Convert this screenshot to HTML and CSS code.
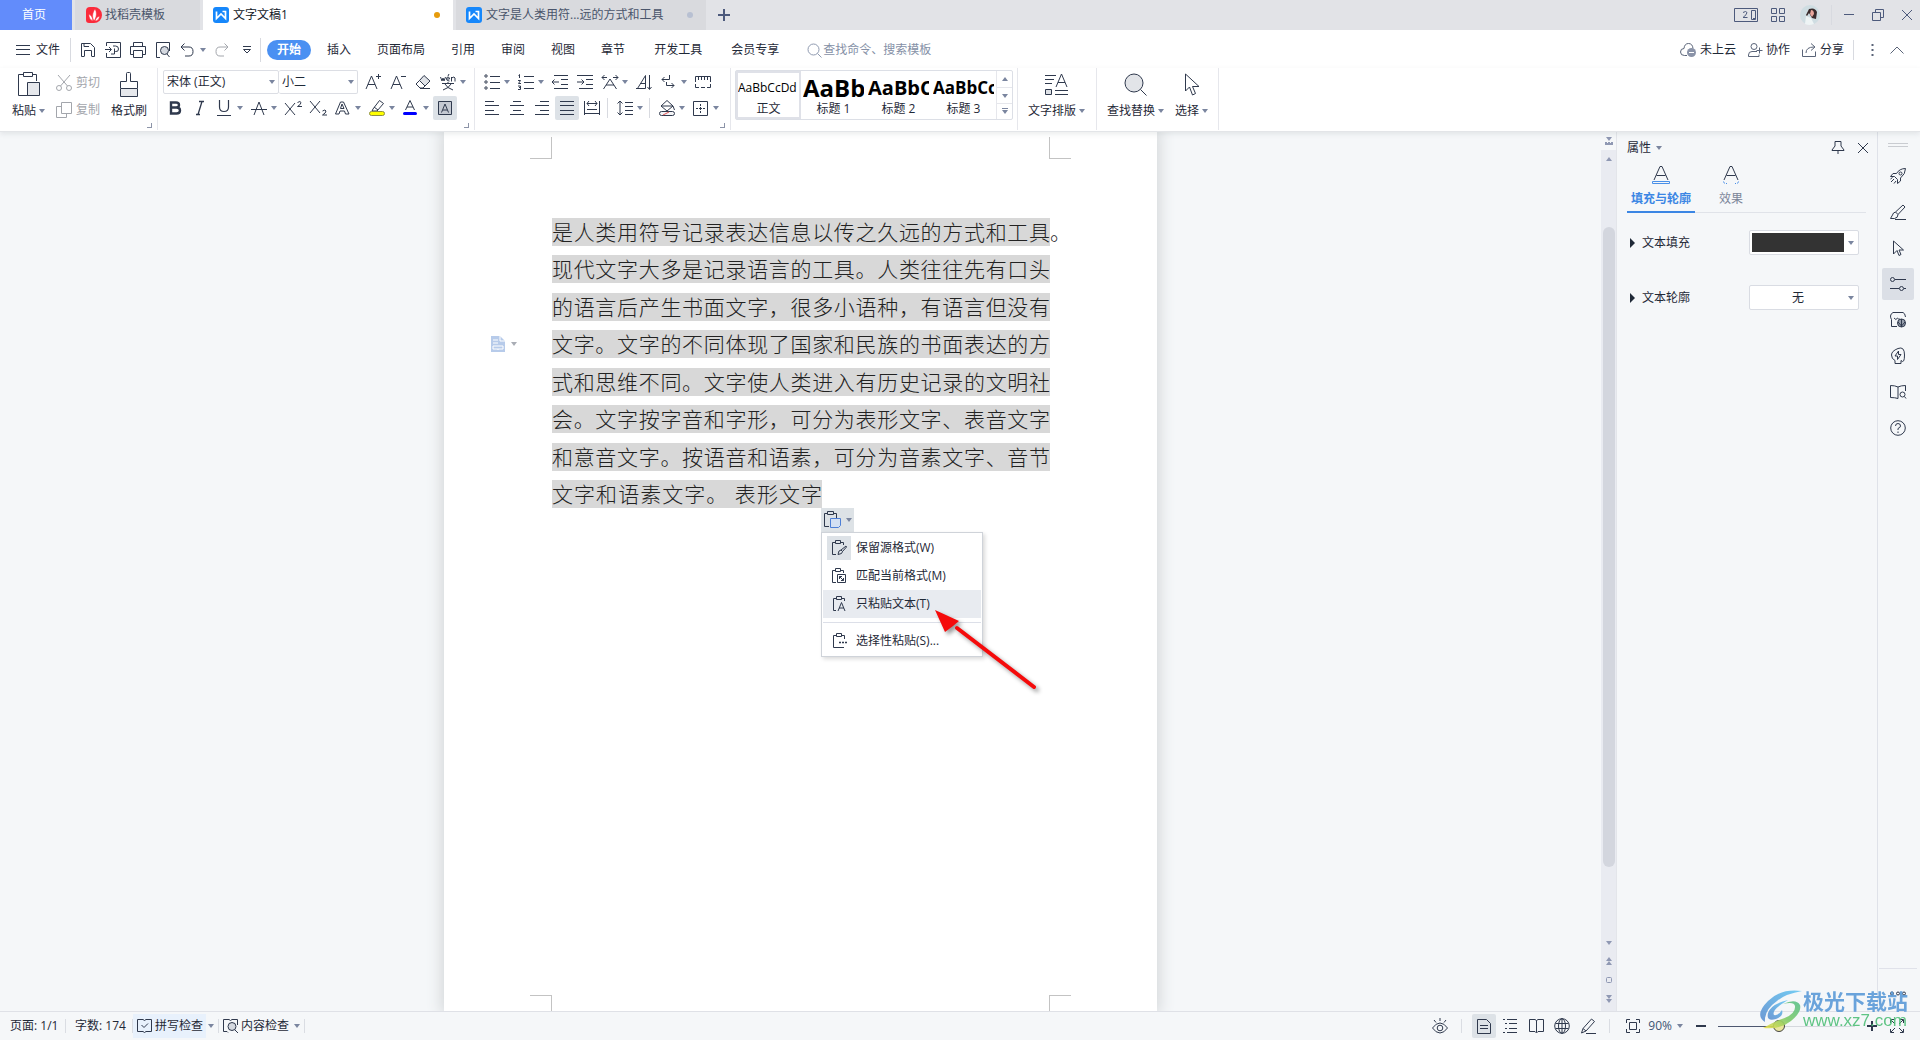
FILE: index.html
```html
<!DOCTYPE html>
<html lang="zh-CN">
<head>
<meta charset="utf-8">
<title>文字文稿1</title>
<link rel="stylesheet" href="styles.css">
</head>
<body>
<header class="titlebar">
  <nav class="tabs">
    <button class="tab home">首页</button>
    <button class="tab docer"><svg class="i" width="16" height="16" viewBox="0 0 16 16"><path d="M4 0h4a8 8 0 0 1 0 16H3q-3 0-3-3V4q0-4 4-4z" fill="#fb2b3b" stroke="none"/><path d="M8 14C6 11 6 6 9 2c2 3 2 8-1 12zM7 14C4 13 2.500 10 3 7c2 1 4 4 4 7zM9 14c1-3 2-4 4.500-5 0 3-2 5-4.500 5z" fill="#fff" stroke="#fb2b3b" stroke-width=".6"/></svg>找稻壳模板</button>
    <button class="tab doc active"><svg class="i" width="16" height="16" viewBox="0 0 16 16"><rect width="16" height="16" rx="3" fill="#1687fb" stroke="none"/><path d="M3.500 4.500v7L8 7l4.500 4.500v-7H9.500" stroke="#fff" stroke-width="1.700"/></svg><span>文字文稿1</span><i class="dot"></i></button>
    <button class="tab doc"><svg class="i" width="16" height="16" viewBox="0 0 16 16"><rect width="16" height="16" rx="3" fill="#1687fb" stroke="none"/><path d="M3.500 4.500v7L8 7l4.500 4.500v-7H9.500" stroke="#fff" stroke-width="1.700"/></svg><span>文字是人类用符...远的方式和工具</span><i class="dot"></i></button>
    <button class="newtab" aria-label="新建"><svg class="i" width="12" height="12" viewBox="0 0 12 12"><path d="M6 0v12M0 6h12" stroke-width="2"/></svg></button>
  </nav>
  <div class="window-tools">
    <button aria-label="窗口"><svg class="i" width="24" height="14" viewBox="0 0 24 14"><path d="M.5.5h23v13H.5zM17.500 2.500h4v9h-4zM9 4.500q3-2 4 0 0 2-4 5h4.500M19 10.500h2"/></svg></button>
    <button class="apps" aria-label="应用"><svg class="i" width="14" height="14" viewBox="0 0 14 14"><path d="M.5.5h5v5h-5zM8.500.5h5v5h-5zM.5 8.500h5v5h-5zM8.500 8.500h5v5h-5z"/></svg></button>
    <button class="user" aria-label="账号"><svg class="i" width="20" height="20" viewBox="0 0 20 20"><circle cx="10" cy="10" r="10" fill="#cfdde2" stroke="none"/><path d="M9 4q6-2 8 3l-1 7-4-1-3-5-2 3-1-1z" fill="#3a2b2c" stroke="none"/><path d="M11 5q3 0 3 4l-2 3-2-3z" fill="#e8a69c" stroke="none"/><path d="M6 11l5 2 3 6q-5 2-9 0z" fill="#eef4f5" stroke="none"/></svg></button>
    <span class="vline"></span>
    <button aria-label="最小化"><svg class="i" width="12" height="12" viewBox="0 0 12 12"><path d="M1 5.500h10"/></svg></button>
    <button aria-label="还原"><svg class="i" width="12" height="12" viewBox="0 0 12 12"><path d="M.5 3.500h8v8h-8zM3.500 3V.5h8v8H9"/></svg></button>
    <button aria-label="关闭"><svg class="i" width="12" height="12" viewBox="0 0 12 12"><path d="M1 1l10 10M11 1L1 11"/></svg></button>
  </div>
</header>

<div class="menubar">
  <button class="file"><svg class="i" width="14" height="12" viewBox="0 0 14 12"><path d="M0 1.500h14M0 5.500h14M0 10.500h14"/></svg>文件</button>
  <span class="vline tall"></span>
  <div class="quick">
    <button class="ib" aria-label="保存"><svg class="i" width="16" height="16" viewBox="0 0 16 16"><path d="M4 14.500H1.500v-13h9l4 4v9H12M4.500 14.500v-6h7v6M4 1.500v3h5"/></svg></button>
    <button class="ib" aria-label="输出PDF"><svg class="i" width="16" height="16" viewBox="0 0 16 16"><path d="M1.500 4V.5h14v15h-14V11M0 7.500h6M4 5l2.500 2.500L4 10M8 4h2.500q3 0 3 3t-3 2.500H9.500V6.500M6 12h3.500V9"/></svg></button>
    <button class="ib" aria-label="打印"><svg class="i" width="16" height="16" viewBox="0 0 16 16"><path d="M3.500 4V.5h9V4M3.500 12.500h-3v-8h15v8h-3M3.500 8.500h9v7h-9z"/></svg></button>
    <button class="ib" aria-label="打印预览"><svg class="i" width="16" height="16" viewBox="0 0 16 16"><path d="M5 15.500H1.500V.5h13V9M14.500 15l-2.500-3"/><circle cx="9.500" cy="8.500" r="4" fill="#d5d9e0"/></svg></button>
    <button class="ib dd" aria-label="撤销"><svg class="i" width="14" height="14" viewBox="0 0 14 14"><path d="M4.500.5L1 4l3.500 3.500M1 4h8q4 0 4 4.500T9 13H5"/></svg><i class="caret"></i></button>
    <button class="ib off" aria-label="恢复"><svg class="i" width="14" height="14" viewBox="0 0 14 14"><path d="M9.500.5L13 4 9.500 7.500M13 4H5Q1 4 1 8.500T5 13h4"/></svg></button>
    <button class="ib" aria-label="更多"><svg class="i" width="8" height="8" viewBox="0 0 8 8"><path d="M0 .5h8M.5 3.500L4 7l3.500-3.500z"/></svg></button>
  </div>
  <span class="vline tall"></span>
  <nav class="ribbon-tabs">
    <button class="on">开始</button><button>插入</button><button>页面布局</button><button>引用</button><button>审阅</button><button>视图</button><button>章节</button><button class="wide">开发工具</button><button class="wide">会员专享</button>
  </nav>
  <label class="search"><svg class="i" width="15" height="15" viewBox="0 0 15 15"><circle cx="6.500" cy="6.500" r="5.500"/><path d="M10.500 10.500l4 4"/></svg><input type="text" aria-label="查找命令" placeholder="查找命令、搜索模板"></label>
  <div class="account">
    <button class="share"><svg class="i" width="16" height="14" viewBox="0 0 16 14"><path d="M7 12.500H4.500Q.5 12.500.5 9T4 5.500Q4.500.5 8.500.5t4.500 5"/><circle cx="11.500" cy="9.500" r="4.500" fill="#8a93a8" stroke="none"/><path d="M9 9.500h5" stroke="#fff"/></svg>未上云</button>
    <button class="share"><svg class="i" width="14" height="14" viewBox="0 0 14 14"><circle cx="6" cy="3.500" r="3"/><path d="M9 8.500H4q-3.500 0-3.500 3.500v1.500h10.500v-2M11.500 4.500v6M8.500 7.500h6"/></svg>协作</button>
    <button class="share"><svg class="i" width="14" height="14" viewBox="0 0 14 14"><path d="M.5 6.500v7h13v-5M4 10q0-6 8-6M9 .5l4 3.500L9 7.500"/></svg>分享</button>
    <span class="vline"></span>
    <button class="ib" aria-label="更多选项"><svg class="i" width="3" height="12" viewBox="0 0 3 12"><path d="M1.500 0v2M1.500 5v2M1.500 10v2" stroke-width="2"/></svg></button>
    <button class="ib" aria-label="收起"><svg class="i" width="14" height="8" viewBox="0 0 14 8"><path d="M.5 7.500L7 1l6.500 6.500"/></svg></button>
  </div>
</div>

<div class="ribbon">
  <section class="group clip">
    <button class="big"><svg class="i" width="24" height="26" viewBox="0 0 24 26"><path d="M11 23.500H1.500v-21H6M15 2.500h4.500V9M6.500.5h9v4h-9z"/><path d="M10.500 10.500h12v13h-12z" fill="#e6e8ec"/></svg><span>粘贴<i class="caret"></i></span></button>
    <div class="stack">
      <button class="off"><svg class="i" width="16" height="16" viewBox="0 0 16 16"><path d="M2 0l9.500 11M14 0L4.500 11"/><circle cx="3" cy="13" r="2.500"/><circle cx="13" cy="13" r="2.500"/></svg>剪切</button>
      <button class="off"><svg class="i" width="16" height="16" viewBox="0 0 16 16"><path d="M5.500.5h10v11h-10zM5 4.500H.5v11h10V12"/></svg>复制</button>
    </div>
    <button class="big brush"><svg class="i" width="20" height="26" viewBox="0 0 20 26"><path d="M1.500 16.500h17v8h-17z" fill="#e6e8ec"/><path d="M1.500 16v-6.500h6v-8q0-1 1-1h2q1 0 1 1v8h7V16"/></svg><span>格式刷</span></button>
    <i class="corner"></i>
  </section>

  <section class="group font">
    <div class="row">
      <label class="combo family"><select aria-label="字体"><option>宋体 (正文)</option></select><i class="caret"></i></label>
      <label class="combo size"><select aria-label="字号"><option>小二</option></select><i class="caret"></i></label>
      <button class="ib" aria-label="增大字号"><svg class="i" width="16" height="16" viewBox="0 0 16 16"><path d="M1 15L6.500 2 12 15M3 10.500h7M13.500 0v5M11 2.500h5"/></svg></button>
      <button class="ib" aria-label="减小字号"><svg class="i" width="16" height="16" viewBox="0 0 16 16"><path d="M1 15L6.500 2 12 15M3 10.500h7M11 2.500h5"/></svg></button>
      <button class="ib" aria-label="清除格式"><svg class="i" width="16" height="16" viewBox="0 0 16 16"><path d="M9 1.500L15 7l-5 5-5.500-5.500z" fill="#dfe2e7"/><path d="M4.500 6.500L1 10l4 4h3l2-2M5 14.500h10"/></svg></button>
      <button class="ib dd" aria-label="拼音指南"><svg class="i" width="16" height="17" viewBox="0 0 16 17"><path d="M.5 3l1.500 4 1-3 1 3 1.500-4M6.500 5h3q0-2-1.500-2t-1.500 2 3 2M8 2l1-2M11.500 7.500V3M11.500 4q3-2 3.500 0v3.500M2 9.500h12M8 8v1M5 10q2 4 8 6M11 10q-2 4-8 6"/></svg><i class="caret"></i></button>
    </div>
    <div class="row">
      <button class="ib" aria-label="加粗"><svg class="i" width="12" height="14" viewBox="0 0 12 14"><path d="M2 1.500h5q3 0 3 2.500T7 6.500H2zM2 6.500h5.500q3.500 0 3.500 3t-3.500 3H2z" stroke-width="2.400"/></svg></button>
      <button class="ib" aria-label="倾斜"><svg class="i" width="10" height="14" viewBox="0 0 10 14"><path d="M4 .5h5M1 13.500h4M7 .5L3 13.500" stroke-width="1.300"/></svg></button>
      <button class="ib dd" aria-label="下划线"><svg class="i" width="14" height="16" viewBox="0 0 14 16"><path d="M2.500 0v7q0 4.500 4.500 4.500T11.500 7V0M0 15.500h14" stroke-width="1.200"/></svg><i class="caret"></i></button>
      <button class="ib dd" aria-label="删除线"><svg class="i" width="16" height="15" viewBox="0 0 16 15"><path d="M3 14L8 1l5 13M0 8.500h16"/></svg><i class="caret"></i></button>
      <button class="ib" aria-label="上标"><svg class="i" width="17" height="15" viewBox="0 0 17 15"><path d="M0 2l10 12M10 2L0 14M12.500 1.500q3-2 3.500 0 0 2-3.500 4H17"/></svg></button>
      <button class="ib" aria-label="下标"><svg class="i" width="17" height="16" viewBox="0 0 17 16"><path d="M0 1l10 12M10 1L0 13M12.500 11q3-2 3.500 0 0 2-3.500 4H17"/></svg></button>
      <button class="ib dd" aria-label="文字效果"><svg class="i" width="15" height="14" viewBox="0 0 15 14"><path d="M.5 13L5.500 1h3l5.500 12h-3.500l-1-3H5l-1 3zM5.500 7.500h3.500L7 3z"/></svg><i class="caret"></i></button>
      <button class="ib dd" aria-label="突出显示"><svg class="i" width="16" height="16" viewBox="0 0 16 16"><path d="M4 9l6.500-8.500 4 3L8 11H3z"/><path d="M5 7l4 3" /><rect x=".5" y="11.500" width="15" height="4" rx="2" fill="#ff0" stroke="#8d8f42"/></svg><i class="caret"></i></button>
      <button class="ib dd" aria-label="字体颜色"><svg class="i" width="14" height="16" viewBox="0 0 14 16"><path d="M2.500 10L7 .5 11.500 10M4 7h6"/><path d="M1.500 13.500h11" stroke="#0000fe" stroke-width="3" stroke-linecap="round"/></svg><i class="caret"></i></button>
      <button class="ib on" aria-label="字符底纹"><svg class="i" width="14" height="14" viewBox="0 0 14 14"><path d="M.5.5h13v13H.5z" fill="#c4c9d2"/><path d="M3.500 11.500L7 3l3.500 8.500M5 9h4"/></svg></button>
    </div>
    <i class="corner"></i>
  </section>

  <section class="group para">
    <div class="row">
      <button class="ib dd" aria-label="项目符号"><svg class="i" width="16" height="16" viewBox="0 0 16 16"><path d="M6 2.500h10M6 8.500h10M6 14.500h10"/><circle cx="2" cy="2" r="1.200"/><circle cx="2" cy="8" r="1.200"/><circle cx="2" cy="14" r="1.200"/></svg><i class="caret"></i></button>
      <button class="ib dd" aria-label="编号"><svg class="i" width="16" height="16" viewBox="0 0 16 16"><path d="M6 2.500h10M6 8.500h10M6 14.500h10M.5 1.500l1-1V4M0 6.500h2.500L.5 9.500H3M0 12h2.500v3.500H0M1 13.500h1.500"/></svg><i class="caret"></i></button>
      <button class="ib" aria-label="减少缩进"><svg class="i" width="16" height="14" viewBox="0 0 16 14"><path d="M2 .5h14M9 4.500h7M9 9.500h7M2 13.500h14M0 7h7M2.500 4.500L0 7l2.500 2.500"/></svg></button>
      <button class="ib" aria-label="增加缩进"><svg class="i" width="16" height="14" viewBox="0 0 16 14"><path d="M0 .5h16M9 4.500h7M9 9.500h7M2 13.500h14M0 7h7M4.500 4.500L7 7 4.500 9.500"/></svg></button>
      <button class="ib dd" aria-label="中文版式"><svg class="i" width="16" height="14" viewBox="0 0 16 14"><path d="M1.500 14L8 4l6.500 10M4 10h8M0 2.500h5M2.500 0L0 2.500 2.500 5M16 2.500h-5M13.500 0L16 2.500 13.500 5"/></svg><i class="caret"></i></button>
      <button class="ib" aria-label="排序"><svg class="i" width="16" height="15" viewBox="0 0 16 15"><path d="M0 13.500h9.500V.5L1.500 13.500M4 8.500h5M13.500 0v14M11.500 12l2 2.500 2-2.500"/></svg></button>
      <button class="ib dd" aria-label="换行"><svg class="i" width="14" height="14" viewBox="0 0 14 14"><path d="M8.500 0v4.500H1M3.500 2L1 4.500 3.500 7M5.500 7v3.500H13M10.500 8l2.500 2.500L10.500 13"/></svg><i class="caret"></i></button>
      <button class="ib" aria-label="制表位"><svg class="i" width="16" height="12" viewBox="0 0 16 12"><path d="M.5 6V.5h15V6M3.500 1v3M6.500 1v3M9.500 1v3M12.500 1v3M.5 8v3.500H4M15.500 8v3.500H12M6 11.500h4"/></svg></button>
    </div>
    <div class="row">
      <button class="ib" aria-label="左对齐"><svg class="i" width="14" height="14" viewBox="0 0 14 14"><path d="M0 .5h9M0 4.500h14M0 9.500h9M0 13.500h14"/></svg></button>
      <button class="ib" aria-label="居中"><svg class="i" width="14" height="14" viewBox="0 0 14 14"><path d="M3 .5h8M0 4.500h14M3 9.500h8M0 13.500h14"/></svg></button>
      <button class="ib" aria-label="右对齐"><svg class="i" width="14" height="14" viewBox="0 0 14 14"><path d="M5 .5h9M0 4.500h14M5 9.500h9M0 13.500h14"/></svg></button>
      <button class="ib on" aria-label="两端对齐"><svg class="i" width="14" height="14" viewBox="0 0 14 14"><path d="M0 .5h14M0 4.500h14M0 9.500h14M0 13.500h14"/></svg></button>
      <button class="ib" aria-label="分散对齐"><svg class="i" width="16" height="14" viewBox="0 0 16 14"><path d="M.5 0v14M15.500 0v14M3 2.500h10M5 0L3 2.500 5 5M11 0l2 2.500L11 5M3 8.500h10M1 12.500h14"/></svg></button>
      <span class="vline sep"></span>
      <button class="ib dd" aria-label="行距"><svg class="i" width="16" height="16" viewBox="0 0 16 16"><path d="M3 1v14M.5 3.500L3 1l2.500 2.500M.5 12.500L3 15l2.500-2.500M8 2.500h8M8 6.500h8M8 10.500h8M8 14.500h8"/></svg><i class="caret"></i></button>
      <span class="vline sep"></span>
      <button class="ib dd" aria-label="底纹颜色"><svg class="i" width="16" height="16" viewBox="0 0 16 16"><path d="M8 .5l6 5.500-6 5L2 6zM2 6h12l1.500 4"/><rect x=".5" y="11.500" width="15" height="4" rx="2" fill="#f4f4f6"/><path d="M4 15l6-3" stroke="#e05252"/></svg><i class="caret"></i></button>
      <button class="ib dd" aria-label="边框"><svg class="i" width="15" height="15" viewBox="0 0 15 15"><path d="M.5.5h14v14H.5zM7.500 3v2M7.500 6v3M7.500 10v2M3 7.500h2M6 7.500h3M10 7.500h2"/></svg><i class="caret"></i></button>
    </div>
    <i class="corner"></i>
  </section>

  <section class="group styles">
    <div class="gallery">
      <button class="on"><span class="s0">AaBbCcDd</span>正文</button>
      <button><span class="s1">AaBb</span>标题 1</button>
      <button><span class="s2">AaBbC</span>标题 2</button>
      <button><span class="s3">AaBbCc</span>标题 3</button>
      <div class="spin"><button aria-label="上一行"><i class="caret up"></i></button><button aria-label="下一行"><i class="caret"></i></button><button aria-label="全部样式"><i class="caret bar"></i></button></div>
    </div>
  </section>

  <section class="group layout">
    <button class="big"><svg class="i" width="24" height="24" viewBox="0 0 24 24"><path d="M0 2.500h11M0 6.500h9M0 10.500h7M11 14l5.500-13L22 14M13 9.500h7M10 17.500h13M10 21.500h13"/><path d="M.5 16.500h6v5h-6z" fill="#dfe2e7"/></svg><span>文字排版<i class="caret"></i></span></button>
  </section>
  <section class="group find">
    <button class="big"><svg class="i" width="24" height="24" viewBox="0 0 24 24"><circle cx="10" cy="10" r="9" fill="#e2e4e8"/><path d="M16.500 16.500l6 6"/></svg><span>查找替换<i class="caret"></i></span></button>
    <button class="big"><svg class="i" width="16" height="24" viewBox="0 0 16 24"><path d="M1.500 1v17l4-4 3 8 3-1.500-3-7H15z"/></svg><span>选择<i class="caret"></i></span></button>
  </section>
</div>

<main class="body">
  <div class="canvas">
    <article class="page">
      <i class="crop tl"></i><i class="crop tr"></i><i class="crop bl"></i><i class="crop br"></i>
      <button class="para-mark" aria-label="段落布局"><svg width="14" height="16" viewBox="0 0 14 16"><path d="M0 0h9l5 5v11H0z" fill="#b7cbea"/><path d="M9 0v5h5M2 4h5M2 7h5M2 10h10v3H2zM7 13v1" fill="none" stroke="#fff"/></svg><i class="caret"></i></button>
      <div class="text">
        <p><mark>是人类用符号记录表达信息以传之久远的方式和工具</mark>。</p>
        <p><mark>现代文字大多是记录语言的工具。人类往往先有口头</mark></p>
        <p><mark>的语言后产生书面文字，很多小语种，有语言但没有</mark></p>
        <p><mark>文字。文字的不同体现了国家和民族的书面表达的方</mark></p>
        <p><mark>式和思维不同。文字使人类进入有历史记录的文明社</mark></p>
        <p><mark>会。文字按字音和字形，可分为表形文字、表音文字</mark></p>
        <p><mark>和意音文字。按语音和语素，可分为音素文字、音节</mark></p>
        <p><mark class="last">文字和语素文字。 表形文字</mark></p>
      </div>
      <div class="paste">
        <button class="paste-btn" aria-label="粘贴选项"><svg class="i" width="18" height="18" viewBox="0 0 18 18"><path d="M5 15.500H.5v-13H4M9 2.500h3.500V7M3.500.5h6v3h-6z"/><path d="M6.500 7.500h10v7l-2 2h-8z" stroke="#4d7fd6" fill="#d3e0f3"/></svg><i class="caret"></i></button>
        <div class="menu">
          <button><span class="mi on"><svg class="i" width="16" height="16" viewBox="0 0 16 16"><path d="M5 14.500H1.500v-12H4M10 2.500h2.500V5M4.500.5h5v3h-5zM15 6l-5 4 1.500 1.500L15.500 7zM10 10l-2 1-1 3.500 3.500-1 1-2"/></svg></span>保留源格式(W)</button>
          <button><span class="mi"><svg class="i" width="16" height="16" viewBox="0 0 16 16"><path d="M5 14.500H1.500v-12H4M10 2.500h2.500V5M4.500.5h5v3h-5zM6.500 6.500h8v8h-8zM8.500 8.500l4 4M8.500 11V8.500H11M12.500 10v2.500H10"/></svg></span>匹配当前格式(M)</button>
          <button class="hover"><span class="mi"><svg class="i" width="16" height="16" viewBox="0 0 16 16"><path d="M5 14.500H2.500v-12H5M11 2.500h2.500V5M5.500.5h5v3h-5zM7 15l3.500-8.500L14 15M8 12h5"/></svg></span>只粘贴文本(T)</button>
          <hr>
          <button><span class="mi"><svg class="i" width="16" height="16" viewBox="0 0 16 16"><path d="M13 14.500H2.500v-12H5M11 2.500h2.500V6M5.500.5h5v3h-5z"/><path d="M8 9.500h2M11 9.500h2M14 9.500h2" stroke-width="1.500"/></svg></span>选择性粘贴(S)...</button>
        </div>
      </div>
      <svg class="pointer" width="120" height="100" viewBox="0 0 120 100"><path d="M22 18L99 77" stroke="#f50b0b" stroke-width="4" stroke-linecap="round"/><path d="M0 0l24 11-6 5-8 6z" fill="#f50b0b"/></svg>
    </article>
  </div>
  <div class="scroll">
    <div class="ruler-btn"><svg width="8" height="8" viewBox="0 0 8 8"><path d="M1 0h6L4 4zM0 5h2v1h1V5h2v1h1V5h2v3H0z"/></svg></div>
    <svg width="6" height="4" viewBox="0 0 6 4"><path d="M0 4h6L3 0z"/></svg>
    <div class="track"><div class="thumb"></div></div>
    <svg width="6" height="4" viewBox="0 0 6 4"><path d="M0 0h6L3 4z"/></svg>
    <svg width="6" height="8" viewBox="0 0 6 8"><path d="M0 4h6L3 0zM0 8h6L3 4z"/></svg>
    <svg width="6" height="6" viewBox="0 0 6 6"><rect x=".5" y=".5" width="5" height="5" rx="1" fill="none" stroke="#8f98b3"/></svg>
    <svg width="6" height="8" viewBox="0 0 6 8"><path d="M0 0h6L3 4zM0 4h6L3 8z"/></svg>
  </div>
  <aside class="panel">
    <header><button class="ptitle">属性<i class="caret"></i></button><button class="ib" aria-label="固定"><svg class="i" width="14" height="13" viewBox="0 0 14 13"><path d="M4 .5h6V5l3 4v.5H1V9l3-4zM7 9.500V13"/></svg></button><button class="ib" aria-label="关闭面板"><svg class="i" width="10" height="10" viewBox="0 0 10 10"><path d="M0 0l10 10M10 0L0 10"/></svg></button></header>
    <nav>
      <button class="on"><svg class="i" width="18" height="18" viewBox="0 0 18 18"><path d="M2 14L8 .5h2L16 14M4.500 9.500h9"/><path d="M.5 15.500h17v2H.5z" stroke="#4a90e8"/></svg>填充与轮廓</button>
      <button><svg class="i" width="18" height="18" viewBox="0 0 18 18"><path d="M2 14L8 .5h2L16 14M4.500 9.500h9"/><path d="M1.500 15.500l1 2M16.500 15.500l-1 2M4 17.500h1M13 17.500h1" stroke="#4a90e8"/></svg>效果</button>
    </nav>
    <div class="prop"><i class="tri"></i><span>文本填充</span><button class="field" aria-label="填充颜色"><span class="swatch"></span><i class="caret"></i></button></div>
    <div class="prop"><i class="tri"></i><label for="outline">文本轮廓</label><div class="field"><select id="outline"><option>无</option></select><i class="caret"></i></div></div>
  </aside>
  <aside class="rail">
    <i class="grip"></i>
    <button aria-label="快捷"><svg class="i" width="16" height="16" viewBox="0 0 16 16"><path d="M15.500.5q-6 0-9 5H3L.5 8.500h4l3 3v4l3-2.500V10q5-4 5-9.500zM4 11l-3 3M6 13l-2 2.500M2.500 9.500L.5 11"/><circle cx="10.500" cy="5.500" r="1.500"/></svg></button>
    <button aria-label="样式"><svg class="i" width="16" height="16" viewBox="0 0 16 16"><path d="M13 1l2 2-7 7.500L5.500 8zM5.500 8Q3 8.500 2.500 11L.5 14.500h4Q8 14 8 10.500M5 15.500h11"/></svg></button>
    <button aria-label="选择"><svg class="i" width="14" height="16" viewBox="0 0 14 16"><path d="M2.500 1v13l3.500-3.500 2 5 2-1-2-4.500h4.500z"/></svg></button>
    <button class="on" aria-label="属性"><svg class="i" width="16" height="16" viewBox="0 0 16 16"><circle cx="2.500" cy="3.500" r="2"/><path d="M5 3.500h11M0 12.500h9M14 12.500h2"/><circle cx="11.500" cy="12.500" r="2"/></svg></button>
    <button aria-label="素材"><svg class="i" width="16" height="16" viewBox="0 0 16 16"><path d="M7 14.500H1.500v-7M1.500 7.500Q.5 6 .5 4t2.500-3.500h10Q15 1 15.500 5M4 6q2 3 3.500 0 1 2 2.500 1"/><circle cx="11.500" cy="11" r="4" fill="#98a0ad"/><path d="M11.500 7v8M8 10l3.500 4L15 10"/></svg></button>
    <button aria-label="灵感"><svg class="i" width="16" height="16" viewBox="0 0 16 16"><path d="M5 12.500Q1.500 11 1.500 7T8 .5 14.500 7 11 12.500v3H5zM8.500 3L5 8h2.500v3.500L11 6.500H8.500z"/></svg></button>
    <button aria-label="查阅"><svg class="i" width="16" height="14" viewBox="0 0 16 14"><path d="M8 2Q5 .5.500.5v12q4.500 0 7.500 1M8 2q3-1.500 7.500-1.500V6M8 2v11.500"/><circle cx="12.500" cy="9.500" r="2.500"/><path d="M14.500 11.500l1.500 2"/></svg></button>
    <button aria-label="帮助"><svg class="i" width="16" height="16" viewBox="0 0 16 16"><circle cx="8" cy="8" r="7.300"/><path d="M5.500 6q0-2.500 2.500-2.500T10.500 6Q10.500 7.500 8 8.500V10M8 11.500V13"/></svg></button>
    <div class="more"><svg class="i" width="16" height="5" viewBox="0 0 16 5"><circle cx="2" cy="2.500" r="1.500"/><circle cx="8" cy="2.500" r="1.500"/><circle cx="14" cy="2.500" r="1.500"/></svg></div>
  </aside>
</main>

<footer class="status">
  <span class="cell pages">页面: 1/1</span><span class="cell words">字数: 174</span>
  <button class="cell spell"><svg class="i" width="15" height="14" viewBox="0 0 15 14"><path d="M6 .5H.5v12H6l1.500 1 1.500-1h5.500V.5H9l-1.500 1zM4.500 6L7 8.500 11 4.500"/></svg>拼写检查</button><button class="cell drop" aria-label="拼写选项"><i class="caret"></i></button>
  <button class="cell content"><svg class="i" width="15" height="14" viewBox="0 0 15 14"><path d="M5 13.500l-1-1H.5V.5H6l1.500 1 1.500-1h5.500V6M12 11l3 3"/><circle cx="9" cy="7.500" r="4" fill="#d5d9e0"/></svg>内容检查<i class="caret"></i></button>
  <div class="views">
    <button class="ib" aria-label="护眼"><svg class="i" width="16" height="16" viewBox="0 0 16 16"><path d="M.5 10Q4 5 8 5t7.500 5Q12 15 8 15T.5 10zM8 0v3M2 2l2 2.500M14 2l-2 2.500"/><circle cx="8" cy="10" r="2.800"/></svg></button>
    <span class="vline"></span>
    <button class="ib on" aria-label="页面视图"><svg class="i" width="14" height="15" viewBox="0 0 14 15"><path d="M.5.5h9l4 4v10H.5zM3 6.500h8M3 9.500h8"/></svg></button>
    <button class="ib" aria-label="大纲"><svg class="i" width="14" height="14" viewBox="0 0 14 14"><path d="M0 .5h2M4 .5h10M2 4.500h2M6 4.500h8M2 9.500h2M6 9.500h8M0 13.500h2M4 13.500h10"/></svg></button>
    <button class="ib" aria-label="阅读版式"><svg class="i" width="15" height="15" viewBox="0 0 15 15"><path d="M.5.5H6l1.500 1 1.500-1h5.500v12H9l-1.500 1.500L6 12.500H.5zM7.500 1.500v12"/></svg></button>
    <button class="ib" aria-label="网页版式"><svg class="i" width="16" height="16" viewBox="0 0 16 16"><circle cx="8" cy="8" r="7.300"/><ellipse cx="8" cy="8" rx="3.500" ry="7.300"/><path d="M1.500 5.500h13M1.500 10.500h13M8 .5v15"/></svg></button>
    <button class="ib" aria-label="写作模式"><svg class="i" width="16" height="16" viewBox="0 0 16 16"><path d="M11.500 1l3 2.500L6 13l-4.500 2L3 10.500zM3 10.500L6 13M6 15.500h10"/></svg></button>
    <span class="vline"></span>
    <button class="ib" aria-label="最佳显示"><svg class="i" width="14" height="14" viewBox="0 0 14 14"><path d="M.5 4V.5H4M10 .5h3.500V4M13.500 10v3.500H10M4 13.500H.5V10M3.500 3.500h7v7h-7z"/></svg></button>
    <button class="zoom">90%<i class="caret"></i></button>
    <button class="step" aria-label="缩小"><svg class="i" width="10" height="10" viewBox="0 0 10 10"><path d="M0 5h10" stroke-width="2"/></svg></button>
    <input class="slider" type="range" min="0" max="100" value="44" aria-label="缩放">
    <button class="step" aria-label="放大"><svg class="i" width="10" height="10" viewBox="0 0 10 10"><path d="M0 5h10M5 0v10" stroke-width="2"/></svg></button>
    <button class="ib full" aria-label="全屏"><svg class="i" width="14" height="14" viewBox="0 0 14 14"><path d="M.5 4V.5H4M10 .5h3.500V4M13.500 10v3.500H10M4 13.500H.5V10M1 1l4 4M13 1L9 5M1 13l4-4M13 13L9 9"/></svg></button>
  </div>
</footer>

<div class="brand">
  <svg width="44" height="40" viewBox="0 0 44 40"><defs><linearGradient id="b" x1="1" y1="0" x2="0" y2="1"><stop offset="0" stop-color="#66c8f3"/><stop offset="1" stop-color="#5f8fd0"/></linearGradient><linearGradient id="g" x1="1" y1="0" x2="0" y2="1"><stop offset="0" stop-color="#58c08c"/><stop offset=".5" stop-color="#7ecb6b"/><stop offset="1" stop-color="#f0e04a"/></linearGradient></defs><path d="M43 1Q22-2 9 11-5 25 6 32q-1-12 12-21Q26 4 43 1z" fill="url(#b)"/><path d="M29 10Q12 14 9 23q-2 9 8 6 8-3 6-9-4 6-8 5-3-5 14-15z" fill="url(#b)"/><path d="M24 14q11-3 12 2 1 9-16 14-9 4-16 8 17 2 28-7 11-9 9-16-4-7-17-1z" fill="url(#g)"/></svg>
  <div><strong>极光下载站</strong><span>www.xz7.com</span></div>
</div>
</body>
</html>
```
FILE: styles.css
```css
* { box-sizing: border-box; }
body {
  margin: 0;
  min-height: 100vh;
  display: flex;
  flex-direction: column;
  position: relative;
  background: #fff;
  color: #1f2937;
  font: 12px/16px "Open Sans", "Noto Sans CJK SC", sans-serif;
  overflow-x: hidden;
}
button, select, input { font: inherit; color: inherit; border: 0; background: none; padding: 0; margin: 0; }
button { display: flex; align-items: center; white-space: nowrap; flex: none; }
select { appearance: none; }
.i { fill: none; stroke: #2f394d; stroke-width: 1; flex: none; display: block; overflow: visible; }
.caret { flex: none; width: 0; height: 0; border: 3px solid transparent; border-top: 4px solid #7a859f; border-bottom: 0; }
.caret.up { border-top: 0; border-bottom: 4px solid #7a859f; }
.vline { width: 1px; height: 20px; background: #d8dae0; flex: none; }
.off { color: #a3a6ac; }
.off .i { stroke: #a3a6ac; }

/* icon buttons: a 24px icon area, plus a caret area when there is a menu */
.ib { width: 25px; height: 24px; justify-content: center; padding-right: 1px; }
.ib.dd { width: 34px; justify-content: flex-end; padding-right: 4px; gap: 4px; }
.ib.dd .i { margin-right: auto; margin-left: 4px; }
.ib.on { background: #dde2e7; border-radius: 2px; width: 24px; margin-right: 1px; padding: 0; }

.titlebar { display: flex; justify-content: space-between; height: 30px; background: #e2e3e7; }
.tabs { display: flex; gap: 3px; }
.tab { height: 30px; background: #d9dade; color: #4a556b; }
.tab.home { width: 72px; padding-right: 4px; justify-content: center; background: #628cfb; color: #fff; }
.tab.docer { width: 125px; padding-left: 11px; gap: 3px; }
.tab.doc { width: 250px; padding: 0 13px 0 10px; gap: 4px; }
.tab.active { background: #fff; color: #111827; }
.dot { width: 6px; height: 6px; border-radius: 50%; background: #b8c0d2; margin-left: auto; }
.active .dot { background: #e69b0c; }
.newtab { width: 30px; justify-content: center; }
.newtab .i, .window-tools .i { stroke: #4d5a7c; }
.window-tools { display: flex; align-items: center; gap: 17px; padding-right: 7px; }
.window-tools .apps { margin-left: -4px; }
.window-tools .user { margin-left: -2px; }
.window-tools .vline { margin: 0 -6px; }

.menubar { display: flex; align-items: center; height: 38px; padding-top: 2px; }
.file { padding: 0 10px 0 16px; gap: 6px; }
.vline.tall { height: 24px; }
.quick { display: flex; align-items: center; padding: 0 0 0 5px; width: 189px; }
.ribbon-tabs { display: flex; align-items: center; margin-left: 6px; }
.ribbon-tabs button { height: 20px; padding: 0 13px; }
.ribbon-tabs .on { background: #4a90f2; color: #fff; border-radius: 10px; padding: 0 10px; margin-right: 3px; font-weight: 700; }
.ribbon-tabs .wide { padding: 0 13px 0 16px; }
.search { display: flex; align-items: center; gap: 1px; margin-left: 15px; }
.search .i { stroke: #8f9ab0; }
.search input { width: 140px; }
.search input::placeholder { color: #8590a6; opacity: 1; }
.account { display: flex; align-items: center; margin-left: auto; padding-right: 10px; }
.account .share { gap: 4px; margin-right: 12px; }
.account .vline { margin: 0 6px 0 -3px; }
.account .i { stroke: #5a6478; }

.ribbon { display: flex; height: 64px; border-bottom: 1px solid #e3e5e8; position: relative; z-index: 2; box-shadow: 0 2px 5px rgba(60, 70, 80, .1); background: #fff; }
.group { display: flex; position: relative; border-right: 1px solid #e6e7ec; height: 62px; flex: none; }
.corner { position: absolute; right: 5px; bottom: 2px; width: 5px; height: 5px; border: solid #8c94a8; border-width: 0 1px 1px 0; }
.big { flex-direction: column; gap: 5px; padding-top: 4px; height: 52px; }
.big > span { display: flex; align-items: center; gap: 3px; }
.big .i { height: 26px; }
.clip { width: 158px; padding-left: 12px; }
.stack { display: flex; flex-direction: column; gap: 11px; padding: 7px 0 0 11px; }
.stack button { gap: 4px; }
.brush { margin-left: 11px; }
.font, .para { flex-direction: column; gap: 2px; padding-top: 2px; }
.font { width: 317px; padding-left: 5px; }
.para { width: 256px; padding-left: 5px; }
.row { display: flex; align-items: center; height: 24px; }
.sep { margin: 0 5px 0 2px; }
.combo { display: grid; align-items: center; height: 24px; border: 1px solid #dcdee4; border-radius: 2px; }
.combo select, .combo .caret { grid-area: 1 / 1; }
.combo select { padding-left: 3px; }
.combo .caret { justify-self: end; margin-right: 3px; }
.family { width: 116px; }
.size { width: 79px; margin-right: 3px; border-left: 0; }
.styles { width: 287px; padding: 2px 4px; }
.gallery { display: flex; height: 50px; border: 1px solid #dcdfe6; border-radius: 2px; width: 278px; }
.gallery > button { width: 65px; height: 48px; flex-direction: column; overflow: hidden; border: 2px solid transparent; }
.gallery > .on { border-color: #dfe1e8; }
.gallery span { height: 29px; line-height: 29px; max-width: 100%; overflow: hidden; color: #000; font-family: "Open Sans", sans-serif; align-self: flex-start; }
.s1, .s2, .s3 { font-weight: 700; }
.s1 { font-size: 24px; }
.s2 { font-size: 20px; }
.s3 { font-size: 17px; }
.spin { width: 16px; border-left: 1px solid #e6e7ec; }
.spin button { width: 100%; height: 16px; justify-content: center; }
.spin button + button { border-top: 1px solid #e6e7ec; }
.caret.bar { position: relative; }
.caret.bar::before { content: ""; position: absolute; left: -3px; top: -6px; width: 6px; height: 1px; background: #7a859f; }
.layout { width: 79px; padding-left: 10px; }
.find { width: 122px; padding-left: 10px; gap: 11px; }

.body { flex: 1; display: flex; min-height: 600px; }
.canvas { flex: 1; min-width: 740px; display: flex; justify-content: center; background: #f5f7f9; overflow: hidden; }
.page { position: relative; width: 713px; flex: none; background: #fff; box-shadow: 0 0 14px 3px #d5d8da; padding: 86px 107px 0 108px; }
.crop { position: absolute; width: 22px; height: 22px; border: 0 solid #c3c3c3; }
.tl { left: 86px; top: 5px; border-width: 0 1px 1px 0; }
.tr { right: 86px; top: 5px; border-width: 0 0 1px 1px; }
.bl { left: 86px; bottom: -6px; border-width: 1px 1px 0 0; }
.br { right: 86px; bottom: -6px; border-width: 1px 0 0 1px; }
.text { display: flex; flex-direction: column; justify-content: space-between; height: 290px; font-size: 21px; line-height: 28px; color: #222; font-weight: 300; }
.text p { margin: 0; display: flex; white-space: nowrap; }
mark { flex: none; width: 498px; height: 28px; background: #d8d8d8; color: inherit; text-align: justify; text-align-last: justify; white-space: normal; }
.last { width: 270px; }
.para-mark { position: absolute; left: 47px; top: 204px; gap: 6px; }
.para-mark .caret { border-top-color: #a9adb5; }
.paste { position: absolute; left: 377px; top: 376px; }
.paste-btn { width: 33px; height: 24px; background: #dde2e6; gap: 4px; padding-left: 3px; }
.menu { width: 162px; background: #fff; border: 1px solid #cfd3d9; box-shadow: 2px 2px 4px rgba(0, 0, 0, .15); padding: 1px; }
.menu > button { width: 100%; height: 28px; padding-left: 4px; gap: 5px; }
.menu .hover { background: #e8ebf0; }
.mi { width: 24px; height: 24px; display: flex; align-items: center; justify-content: center; }
.mi.on { background: #dde2e7; }
.menu hr { margin: 4px 0; border: 0; height: 1px; background: #dcdfe8; }
.pointer { position: absolute; left: 491px; top: 478px; filter: drop-shadow(3px 3px 2px rgba(0, 0, 0, .4)); }

.scroll { width: 15px; flex: none; display: flex; flex-direction: column; align-items: center; gap: 12px; background: #e9ebf1; padding-bottom: 8px; }
.scroll svg { fill: #8f98b3; flex: none; }
.ruler-btn { width: 15px; height: 18px; background: #f5f7f9; display: flex; align-items: center; justify-content: center; margin-bottom: -5px; }
.track { flex: 1; width: 12px; padding: 54px 0 62px; display: flex; }
.thumb { flex: 1; background: #d3d6de; border-radius: 6px; }

.panel { width: 261px; flex: none; background: #f5f7f9; padding: 0 11px 0 10px; border-left: 1px solid #e3e5ea; }
.panel header { display: flex; align-items: center; padding-top: 4px; height: 27px; margin-right: -10px; }
.ptitle { gap: 5px; margin-right: auto; }
.panel nav { display: flex; height: 54px; border-bottom: 1px solid #e0e3e9; }
.panel nav button { flex-direction: column; width: 68px; height: 54px; padding-top: 7px; gap: 7px; color: #7c8699; margin-right: 2px; }
.panel nav .on { color: #3b86e4; border-bottom: 2px solid #3b86e4; font-weight: 700; }
.prop { display: flex; align-items: center; height: 25px; margin: 17px 7px 30px 3px; gap: 7px; }
.tri { border: 5px solid transparent; border-left-color: #1f2937; border-right: 0; }
.field { width: 110px; height: 25px; margin-left: auto; background: #fff; border: 1px solid #d9dce3; border-radius: 2px; display: flex; align-items: center; padding: 2px 4px 2px 2px; gap: 4px; }
.field .caret { margin-left: auto; }
.field select { flex: 1; text-align: center; text-align-last: center; }
.swatch { width: 92px; height: 19px; background: #333; }

.rail { width: 43px; flex: none; background: #f5f7f9; border-left: 1px solid #dfe2e9; display: flex; flex-direction: column; align-items: center; gap: 4px; padding: 11px 2px 15px 0; }
.grip { width: 20px; height: 4px; border: solid #c9ccd1; border-width: 1px 0; margin-bottom: 9px; }
.rail button { width: 32px; height: 32px; justify-content: center; }
.rail .on { background: #dbdfe6; border-radius: 2px; }
.more { margin-top: auto; width: 38px; border-top: 1px solid #e0e2ea; padding-top: 22px; display: flex; justify-content: center; }

.status { display: flex; align-items: center; height: 29px; border-top: 1px solid #dfe1e7; background: #f5f7f9; }
.cell { height: 24px; display: flex; align-items: center; position: relative; }
.cell:not(.spell)::after { content: ""; position: absolute; right: 0; top: 5px; width: 1px; height: 14px; background: #dadde3; }
.pages { width: 66px; padding-left: 10px; }
.words { width: 67px; padding-left: 9px; }
.spell { width: 73px; background: #e8f1fc; gap: 3px; padding-left: 4px; }
.drop { width: 13px; padding-left: 2px; }
.content { width: 86px; gap: 3px; padding-left: 4px; }
.content .caret { margin-left: 2px; }
.views { margin-left: auto; display: flex; align-items: center; padding-right: 10px; }
.views .ib { width: 26px; padding: 0; margin: 0; }
.views .ib.on { width: 24px; margin-right: 1px; }
.views .vline { height: 14px; margin: 0 10px 0 8px; background: #dadde3; }
.zoom { gap: 5px; margin: 0 13px 0 2px; color: #3d5573; }
.slider { appearance: none; width: 137px; height: 16px; margin: 0 12px; background: linear-gradient(#4d5770, #4d5770) 0 8px / 42% 1px no-repeat, linear-gradient(#d5d8de, #d5d8de) 0 8px / 100% 1px no-repeat; }
.slider::-webkit-slider-thumb { appearance: none; width: 12px; height: 12px; border: 1px solid #444; border-radius: 50%; background: #e9e59c; }
.views .full { margin-left: 7px; }
.brand { position: absolute; right: 10px; bottom: 10px; display: flex; align-items: center; pointer-events: none; opacity: .9; z-index: 3; }
.brand div { display: flex; flex-direction: column; width: 107px; }
.brand strong { font-size: 21px; line-height: 22px; color: #5b9bd8; white-space: nowrap; }
.brand span { font: 17px/18px "Liberation Sans", sans-serif; color: #4fbf78; }
```
